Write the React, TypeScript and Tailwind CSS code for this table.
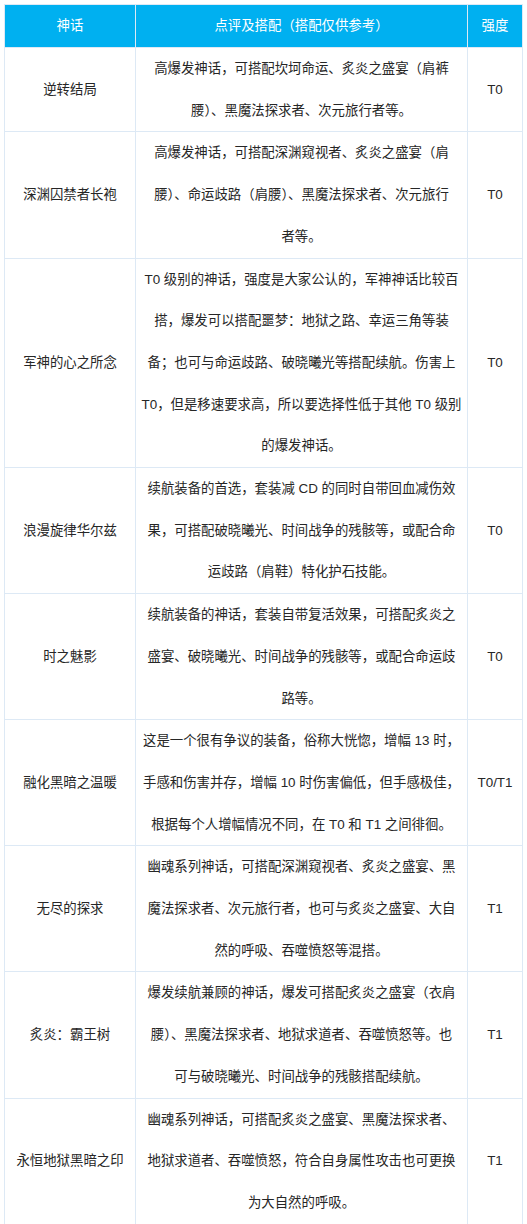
const rows: { name: string; lines: string[]; tier: string }[] = [
  {
    name: '逆转结局',
    lines: ['高爆发神话，可搭配坎坷命运、炙炎之盛宴（肩裤', '腰）、黑魔法探求者、次元旅行者等。'],
    tier: 'T0',
  },
  {
    name: '深渊囚禁者长袍',
    lines: ['高爆发神话，可搭配深渊窥视者、炙炎之盛宴（肩', '腰）、命运歧路（肩腰）、黑魔法探求者、次元旅行', '者等。'],
    tier: 'T0',
  },
  {
    name: '军神的心之所念',
    lines: [
      'T0 级别的神话，强度是大家公认的，军神神话比较百',
      '搭，爆发可以搭配噩梦：地狱之路、幸运三角等装',
      '备；也可与命运歧路、破晓曦光等搭配续航。伤害上',
      'T0，但是移速要求高，所以要选择性低于其他 T0 级别',
      '的爆发神话。',
    ],
    tier: 'T0',
  },
  {
    name: '浪漫旋律华尔兹',
    lines: ['续航装备的首选，套装减 CD 的同时自带回血减伤效', '果，可搭配破晓曦光、时间战争的残骸等，或配合命', '运歧路（肩鞋）特化护石技能。'],
    tier: 'T0',
  },
  {
    name: '时之魅影',
    lines: ['续航装备的神话，套装自带复活效果，可搭配炙炎之', '盛宴、破晓曦光、时间战争的残骸等，或配合命运歧', '路等。'],
    tier: 'T0',
  },
  {
    name: '融化黑暗之温暖',
    lines: ['这是一个很有争议的装备，俗称大恍惚，增幅 13 时，', '手感和伤害并存，增幅 10 时伤害偏低，但手感极佳，', '根据每个人增幅情况不同，在 T0 和 T1 之间徘徊。'],
    tier: 'T0/T1',
  },
  {
    name: '无尽的探求',
    lines: ['幽魂系列神话，可搭配深渊窥视者、炙炎之盛宴、黑', '魔法探求者、次元旅行者，也可与炙炎之盛宴、大自', '然的呼吸、吞噬愤怒等混搭。'],
    tier: 'T1',
  },
  {
    name: '炙炎：霸王树',
    lines: ['爆发续航兼顾的神话，爆发可搭配炙炎之盛宴（衣肩', '腰）、黑魔法探求者、地狱求道者、吞噬愤怒等。也', '可与破晓曦光、时间战争的残骸搭配续航。'],
    tier: 'T1',
  },
  {
    name: '永恒地狱黑暗之印',
    lines: ['幽魂系列神话，可搭配炙炎之盛宴、黑魔法探求者、', '地狱求道者、吞噬愤怒，符合自身属性攻击也可更换', '为大自然的呼吸。'],
    tier: 'T1',
  },
];

export default function App() {
  return (
    <div className="bg-white min-h-screen pt-[4px] pl-[4px] font-['Liberation_Sans','Noto_Sans_CJK_SC',sans-serif] text-[13.4px] text-[#262626]">
      <table className="table-fixed border-collapse w-[518px]">
        <colgroup>
          <col className="w-[131px]" />
          <col className="w-[332px]" />
          <col className="w-[55px]" />
        </colgroup>
        <thead>
          <tr className="bg-[#00b0f0] text-white h-[43px]">
            <th className="border border-[#dde9f5] font-normal text-center">神话</th>
            <th className="border border-[#dde9f5] font-normal text-center">点评及搭配（搭配仅供参考）</th>
            <th className="border border-[#dde9f5] font-normal text-center">强度</th>
          </tr>
        </thead>
        <tbody>
          {rows.map((r) => (
            <tr key={r.name}>
              <td className="border border-[#dde9f5] text-center align-middle whitespace-nowrap">{r.name}</td>
              <td className="border border-[#dde9f5] text-center align-middle leading-[41.7px] whitespace-nowrap">
                {r.lines.map((l, i) => (
                  <div key={i}>{l}</div>
                ))}
              </td>
              <td className="border border-[#dde9f5] text-center align-middle whitespace-nowrap">{r.tier}</td>
            </tr>
          ))}
        </tbody>
      </table>
    </div>
  );
}
